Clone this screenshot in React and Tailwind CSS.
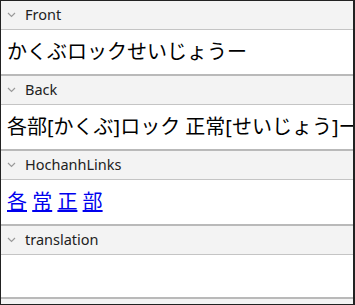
import React from "react";

const cjk = { fontFamily: '"Noto Sans", "Noto Sans CJK JP", sans-serif' };

const Chevron = () => (
  <svg width="9" height="6" viewBox="0 0 9 6" className="shrink-0">
    <path d="M1 1l3.5 3.5L8 1" fill="none" stroke="#9a9a9a" strokeWidth="1.2" />
  </svg>
);

const Header = ({ name }) => (
  <div className="flex h-[29px] items-center gap-[9px] bg-[#f3f3f3] pl-[6px] border-b border-[#c4c4c4]">
    <Chevron />
    <span className="text-[14.5px] text-[#222]">{name}</span>
  </div>
);

const Field = ({ name, children }) => (
  <div className="border-b-2 border-[#b9b9b9]">
    <Header name={name} />
    <div className="h-[44px] overflow-hidden whitespace-nowrap bg-white px-[6px] text-[20px] leading-[44px] text-black">
      {children}
    </div>
  </div>
);

export default function App() {
  const links = ["各", "常", "正", "部"];
  return (
    <div
      className="h-[305px] w-[355px] overflow-hidden border-t border-l border-b border-r-2 border-[#222] bg-[#f3f3f3]"
      style={cjk}
    >
      <Field name="Front">かくぶロックせいじょうー</Field>
      <Field name="Back">各部[かくぶ]ロック 正常[せいじょう]ー</Field>
      <Field name="HochanhLinks">
        {links.map((c, i) => (
          <React.Fragment key={c}>
            <a href="#" className="text-[#0000ee] underline">
              {c}
            </a>
            {i < links.length - 1 ? " " : ""}
          </React.Fragment>
        ))}
      </Field>
      <div className="border-b-2 border-[#b9b9b9]">
        <Header name="translation" />
        <div className="h-[42px] bg-white" />
      </div>
    </div>
  );
}
